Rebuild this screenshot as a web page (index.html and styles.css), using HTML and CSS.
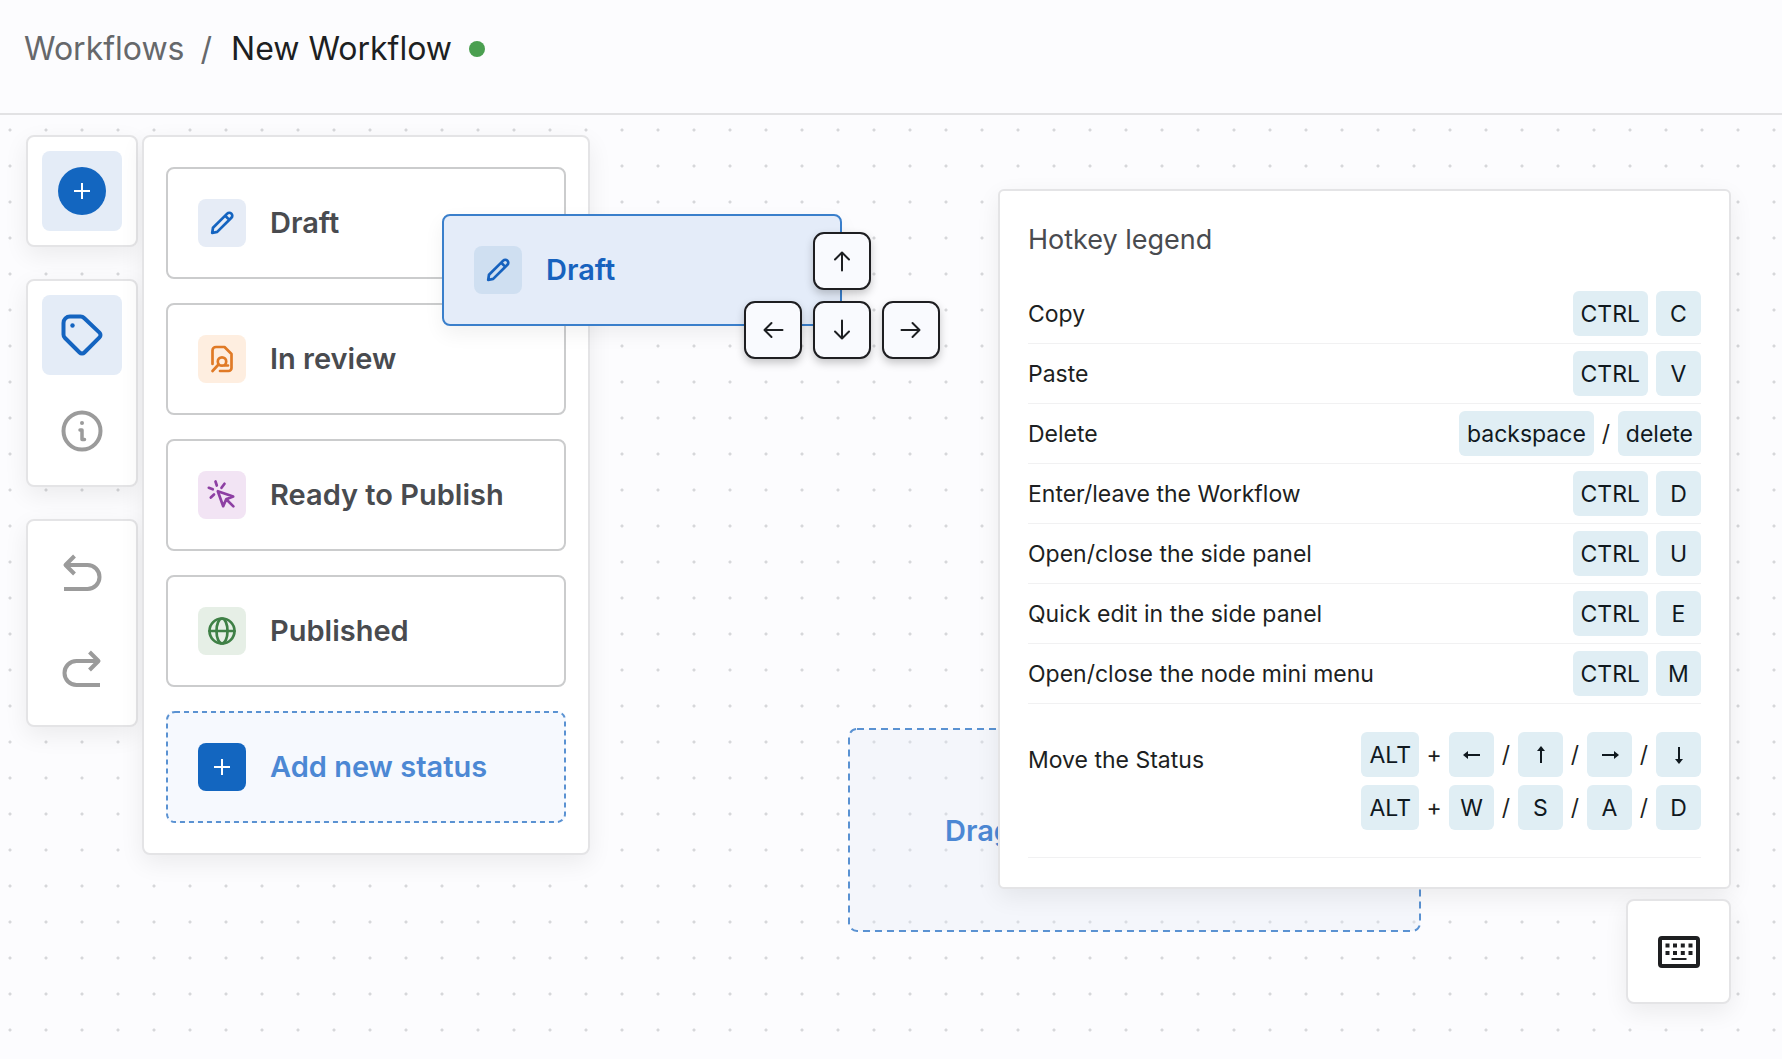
FILE: index.html
```html
<!DOCTYPE html>
<html lang="en">
<head>
<meta charset="utf-8">
<meta name="viewport" content="width=device-width, initial-scale=1">
<title>New Workflow</title>
<link rel="stylesheet" href="styles.css">
</head>
<body>
<svg class="sprite" aria-hidden="true">
  <symbol id="pencil" viewBox="0 0 28 28"><path d="M4.200 24l.8-5.200L19.200 4.600a2.900 2.900 0 0 1 4.200 4.200L9.200 22.900zM17.500 7l3.600 3.600"/></symbol>
  <symbol id="plus" viewBox="0 0 16 16"><path d="M8 0v16M0 8h16"/></symbol>
  <symbol id="arrow" viewBox="0 0 24 24"><path d="M12 21.500V4M5 10.500L12 3.500l7 7"/></symbol>
  <symbol id="arrow-small" viewBox="0 0 18 18"><path d="M9 17V3"/><path class="head" d="M9 0l4 5H5z"/></symbol>
</svg>

<header class="topbar">
  <nav class="breadcrumb" aria-label="Breadcrumb">
    <a href="#">Workflows</a>
    <span class="divider">/</span>
    <h1>New Workflow</h1>
    <span class="state" role="img" aria-label="Active"></span>
  </nav>
</header>

<main class="canvas">
  <div class="dropzone">
    <svg class="dashes" aria-hidden="true"><rect width="100%" height="100%" rx="8"/></svg>
    <span>Drag</span>
  </div>

  <div class="tools">
    <div class="rail">
      <div class="toolbox">
        <button class="tool active" type="button" aria-label="Add"><span class="round"><svg class="i16"><use href="#plus"/></svg></span></button>
      </div>
      <div class="toolbox">
        <button class="tool active" type="button" aria-label="Statuses">
          <svg class="i42" viewBox="0 0 42 42"><path d="M9 2.500h10.500a5 5 0 0 1 3.600 1.500L38.500 18.600a3.400 3.400 0 0 1 0 4.800L23.400 38.500a3.400 3.400 0 0 1-4.800 0L4 24a5 5 0 0 1-1.500-3.600V9A6.500 6.500 0 0 1 9 2.500z"/><circle class="fill" cx="11.500" cy="11.500" r="2.200"/></svg>
        </button>
        <button class="tool" type="button" aria-label="Information">
          <svg class="i42" viewBox="0 0 42 42"><circle cx="21" cy="21" r="18.500"/><path class="stem" d="M19 20h2v9.500h2.500"/><circle class="fill" cx="21" cy="13" r="2"/></svg>
        </button>
      </div>
      <div class="toolbox">
        <button class="tool" type="button" aria-label="Undo">
          <svg class="i42" viewBox="0 0 42 42"><path d="M13.500 2L4.500 11l9 9M5 11h21.500a12 12 0 0 1 0 24H3"/></svg>
        </button>
        <button class="tool" type="button" aria-label="Redo">
          <svg class="i42" viewBox="0 0 42 42"><path d="M28.500 2l9 9-9 9M37 11H15.500a12 12 0 0 0 0 24H39"/></svg>
        </button>
      </div>
    </div>

    <section class="palette" aria-label="Statuses">
      <button class="status" type="button"><span class="badge blue"><svg class="i28"><use href="#pencil"/></svg></span>Draft</button>
      <button class="status" type="button"><span class="badge orange"><svg class="i28" viewBox="0 0 28 28"><path d="M4.500 19V5.500a3.500 3.500 0 0 1 3.500-3.500h8.500L23.500 9v14a3 3 0 0 1-3 3H12M4.500 26l6-6.500M20 20.500h-3"/><circle cx="14" cy="16.500" r="4.200"/></svg></span>In review</button>
      <button class="status" type="button"><span class="badge purple"><svg class="i28" viewBox="0 0 28 28"><path d="M7.500.5l1.300 4M.8 6.800l4 1.500M16.500 2.800l-3 4M6 13.500l-3.200 3M9.800 10.200l15.400 5.300-7 2.700-3 7zM18.200 18.200l7.200 7.200"/></svg></span>Ready to Publish</button>
      <button class="status" type="button"><span class="badge green"><svg class="i28" viewBox="0 0 28 28"><circle cx="14" cy="14" r="12.500"/><ellipse cx="14" cy="14" rx="5.500" ry="12.500"/><path d="M1.500 14h25"/></svg></span>Published</button>
      <button class="status add" type="button">
        <svg class="dashes" aria-hidden="true"><rect width="100%" height="100%" rx="8"/></svg>
        <span class="badge solid"><svg class="i16"><use href="#plus"/></svg></span>Add new status
      </button>
    </section>
  </div>

  <aside class="help">
    <section class="legend">
      <h2>Hotkey legend</h2>
      <dl>
        <div class="row"><dt>Copy</dt><dd><kbd>CTRL</kbd><kbd>C</kbd></dd></div>
        <div class="row"><dt>Paste</dt><dd><kbd>CTRL</kbd><kbd>V</kbd></dd></div>
        <div class="row"><dt>Delete</dt><dd><kbd>backspace</kbd><span>/</span><kbd>delete</kbd></dd></div>
        <div class="row"><dt>Enter/leave the Workflow</dt><dd><kbd>CTRL</kbd><kbd>D</kbd></dd></div>
        <div class="row"><dt>Open/close the side panel</dt><dd><kbd>CTRL</kbd><kbd>U</kbd></dd></div>
        <div class="row"><dt>Quick edit in the side panel</dt><dd><kbd>CTRL</kbd><kbd>E</kbd></dd></div>
        <div class="row"><dt>Open/close the node mini menu</dt><dd><kbd>CTRL</kbd><kbd>M</kbd></dd></div>
        <div class="row tall">
          <dt>Move the Status</dt>
          <dd class="combos">
            <div class="combo"><kbd>ALT</kbd><span class="plus">+</span><kbd aria-label="Left"><svg class="i18 left"><use href="#arrow-small"/></svg></kbd><span>/</span><kbd aria-label="Up"><svg class="i18"><use href="#arrow-small"/></svg></kbd><span>/</span><kbd aria-label="Right"><svg class="i18 right"><use href="#arrow-small"/></svg></kbd><span>/</span><kbd aria-label="Down"><svg class="i18 down"><use href="#arrow-small"/></svg></kbd></div>
            <div class="combo"><kbd>ALT</kbd><span class="plus">+</span><kbd>W</kbd><span>/</span><kbd>S</kbd><span>/</span><kbd>A</kbd><span>/</span><kbd>D</kbd></div>
          </dd>
        </div>
      </dl>
    </section>
    <button class="keyboard" type="button" aria-label="Toggle hotkey legend">
      <svg viewBox="0 0 42 32"><rect class="frame" x="2" y="2" width="38" height="28" rx="2"/><path d="M7.500 7.500h4v4h-4zM15 7.500h4v4h-4zM22.800 7.500h4v4h-4zM30.500 7.500h4v4h-4zM7.500 15h4v4h-4zM15 15h4v4h-4zM22.800 15h4v4h-4zM30.500 15h4v4h-4zM13.500 22h15v2h-15z"/></svg>
    </button>
  </aside>

  <div class="status dragged"><span class="badge"><svg class="i28"><use href="#pencil"/></svg></span>Draft</div>
  <div class="pad" aria-label="Move">
    <button class="up" type="button" aria-label="Up"><svg class="i24"><use href="#arrow"/></svg></button>
    <button type="button" aria-label="Left"><svg class="i24 left"><use href="#arrow"/></svg></button>
    <button type="button" aria-label="Down"><svg class="i24 down"><use href="#arrow"/></svg></button>
    <button type="button" aria-label="Right"><svg class="i24 right"><use href="#arrow"/></svg></button>
  </div>
</main>
</body>
</html>
```
FILE: styles.css
```css
* { box-sizing: border-box; }

body {
  display: flex;
  flex-direction: column;
  min-height: 100vh;
  margin: 0;
  background: #fcfcfe;
  color: #1d1f22;
  font-family: Inter, "Liberation Sans", sans-serif;
}

button { margin: 0; font: inherit; cursor: pointer; }
svg { fill: none; stroke: currentColor; stroke-width: 2; }
.fill, .head { fill: currentColor; stroke: none; }
.sprite { position: absolute; width: 0; height: 0; }

.i16 { width: 16px; height: 16px; }
.i18 { width: 18px; height: 18px; }
.i24 { width: 24px; height: 24px; stroke-linecap: round; stroke-linejoin: round; }
.i28 { width: 28px; height: 28px; stroke-width: 2.7; stroke-linecap: round; stroke-linejoin: round; overflow: visible; }
.i42 { width: 42px; height: 42px; stroke-width: 4; stroke-linejoin: round; }
.stem { stroke-width: 3.5; stroke-linecap: round; }
.left { transform: rotate(-90deg); }
.right { transform: rotate(90deg); }
.down { transform: rotate(180deg); }

/* Top bar */
.topbar {
  padding: 29px 24px 44px;
  border-bottom: 2px solid #e2e2e4;
}
.breadcrumb {
  display: flex;
  align-items: center;
  font-size: 32px;
  line-height: 40px;
  color: #66686b;
}
.breadcrumb a { color: inherit; text-decoration: none; }
.breadcrumb h1 { margin: 0; font: inherit; color: #1d1f22; }
.divider { margin: 0 19px 0 16px; }
.state {
  width: 16px;
  height: 16px;
  margin-left: 17px;
  border-radius: 50%;
  background: #4a9f50;
}

/* Canvas */
.canvas {
  position: relative;
  flex: 1;
  display: flex;
  justify-content: space-between;
  align-items: flex-start;
  padding: 20px 51px 54px 26px;
  background: radial-gradient(circle, #d6d7da 1px, transparent 2px) -8px -3px / 36px 36px;
}

.toolbox, .palette, .legend, .keyboard {
  border: 2px solid #e4e4e6;
  border-radius: 8px;
  background: #fff;
  box-shadow: 0 8px 24px rgba(0, 0, 0, 0.07);
}

.tools { display: flex; align-items: flex-start; gap: 4px; }
.rail { display: flex; flex-direction: column; gap: 32px; }
.toolbox {
  display: flex;
  flex-direction: column;
  gap: 16px;
  padding: 14px;
}
.tool {
  display: grid;
  place-items: center;
  width: 80px;
  height: 80px;
  padding: 0;
  border: 0;
  border-radius: 8px;
  background: none;
  color: #9b9b9b;
}
.tool.active { background: #e4ecf7; color: #1464c0; }
.round {
  display: grid;
  place-items: center;
  width: 48px;
  height: 48px;
  border-radius: 50%;
  background: #1366c0;
  color: #fff;
}

.palette {
  display: flex;
  flex-direction: column;
  gap: 24px;
  padding: 30px 22px;
}
.status {
  display: flex;
  align-items: center;
  gap: 24px;
  width: 400px;
  height: 112px;
  padding: 0 30px;
  border: 2px solid #cbcccd;
  border-radius: 8px;
  background: #fff;
  color: #494b4f;
  font-size: 29px;
  font-weight: 600;
  line-height: 36px;
  text-align: left;
}
.badge {
  display: grid;
  place-items: center;
  width: 48px;
  height: 48px;
  border-radius: 8px;
}
.blue { background: #e6ecf6; color: #1464c0; }
.orange { background: #feeee0; color: #e07a26; }
.purple { background: #f2e4f4; color: #8d3fa3; }
.green { background: #e6efe6; color: #3f8046; }
.solid { background: #1366c0; color: #fff; }

.dashes {
  position: absolute;
  inset: 0;
  width: 100%;
  height: 100%;
  overflow: visible;
  color: #5a92d2;
  stroke-dasharray: 5 4;
}
.status.add {
  position: relative;
  padding: 0 31px;
  border: 1px solid transparent;
  background: #f6f9fe;
  color: #4c88d4;
}

/* Items placed freely on the canvas */
.dropzone {
  position: absolute;
  left: 849px;
  top: 614px;
  display: flex;
  align-items: center;
  width: 571px;
  height: 202px;
  padding-left: 96px;
  border-radius: 8px;
  background: rgba(226, 232, 245, 0.3);
  color: #4c88d4;
  font-size: 29px;
  font-weight: 600;
}
.dropzone .dashes { stroke-dasharray: 7 5; }

.dragged {
  position: absolute;
  left: 442px;
  top: 99px;
  border-color: #3a7fcb;
  background: #e4ecf9;
  color: #1762be;
  box-shadow: 0 8px 20px rgba(0, 0, 0, 0.06);
}
.dragged .badge { background: #cfdff1; }

.pad {
  position: absolute;
  left: 744px;
  top: 117px;
  display: grid;
  grid-template-columns: repeat(3, 58px);
  grid-auto-rows: 58px;
  gap: 11px;
}
.pad .up { grid-column: 2; }
.pad button:nth-child(2) { grid-column: 1; }
.pad button {
  display: grid;
  place-items: center;
  padding: 0;
  border: 2px solid #1e1e21;
  border-radius: 11px;
  background: #f9fafe;
  color: #1d1f22;
  box-shadow: 0 4px 8px rgba(0, 0, 0, 0.22);
}

/* Hotkeys */
.help {
  position: relative;
  display: flex;
  flex-direction: column;
  align-items: flex-end;
  gap: 10px;
  padding-top: 54px;
}
.legend { width: 733px; padding: 31px 28px 29px; border-radius: 6px; }
.legend h2 {
  margin: 0 0 26px;
  color: #494b4f;
  font-size: 27px;
  font-weight: 400;
  line-height: 36px;
}
.legend dl, .legend dd { margin: 0; }
.row {
  display: flex;
  justify-content: space-between;
  align-items: center;
  height: 60px;
  border-bottom: 1px solid #f1f1f2;
  font-size: 23px;
  line-height: 32px;
}
.row dd, .combo { display: flex; align-items: center; }
.row kbd {
  display: grid;
  place-items: center;
  min-width: 45px;
  height: 45px;
  padding: 0 8px;
  border-radius: 6px;
  background: #e0eef4;
  color: #10191f;
  font: inherit;
}
kbd + kbd { margin-left: 8px; }
.row span { width: 24px; text-align: center; }
.row .plus { width: 30px; }
.row.tall { align-items: flex-start; height: auto; padding: 28px 0 27px; }
.row.tall dt { padding-top: 12px; }
.row .combos { flex-direction: column; align-items: flex-end; gap: 8px; }

.keyboard {
  display: grid;
  place-items: center;
  width: 105px;
  height: 105px;
  padding: 0;
  color: #1e1f21;
}
.keyboard svg { width: 42px; height: 32px; fill: currentColor; stroke: none; }
.keyboard .frame { fill: none; stroke: currentColor; stroke-width: 4; }
```
